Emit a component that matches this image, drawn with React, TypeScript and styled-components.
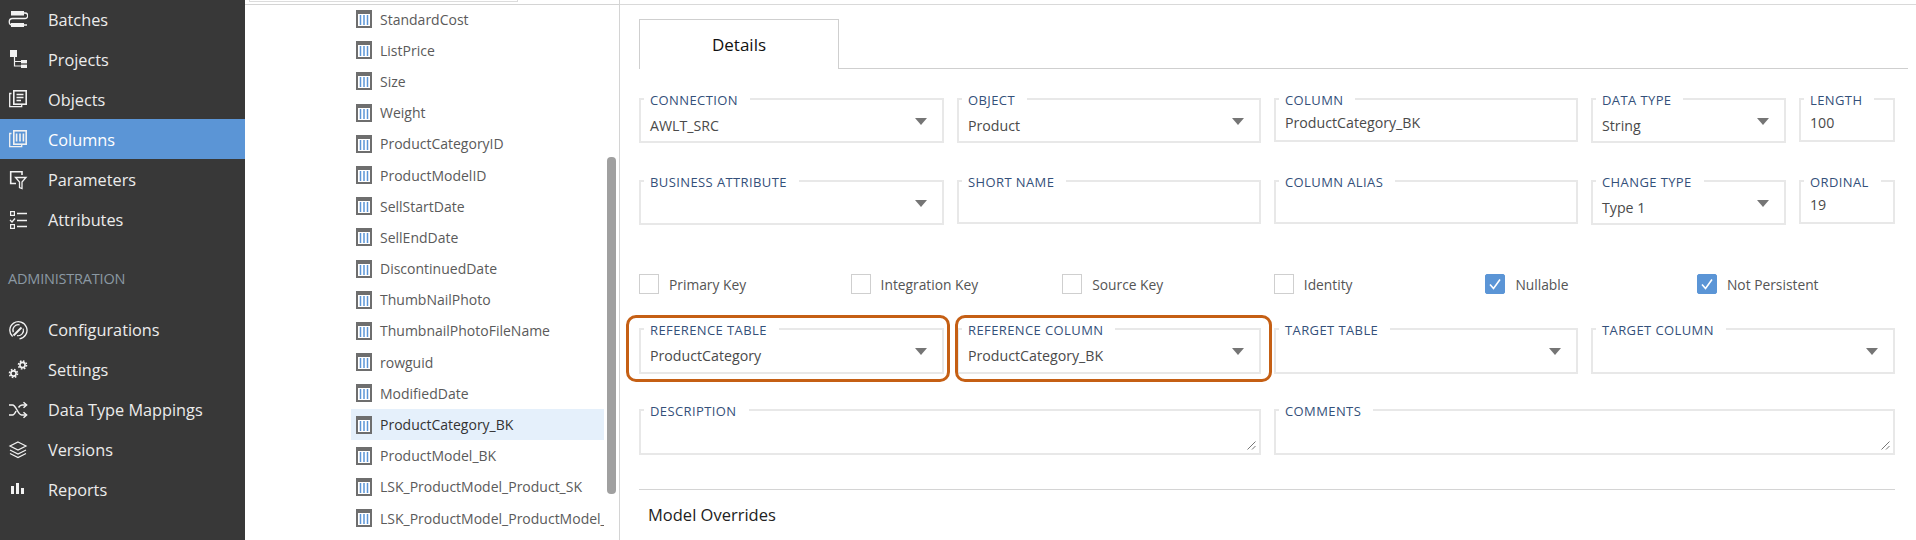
import React from 'react'
import styled, { createGlobalStyle } from 'styled-components'

const GlobalStyle = createGlobalStyle`
  html, body {
    margin: 0;
    background: #fff;
    overflow: hidden;
  }
  * {
    box-sizing: border-box;
  }
`

const BatchesIcon = () => (
  <NavSvg viewBox="0 0 20 20">
    <rect x="3" y="1" width="13" height="4.5" fill="currentColor" />
    <rect x="3" y="13" width="13" height="4" fill="currentColor" />
    <path d="M16 3h1a2.6 2.6 0 0 1 0 5.5H4.5a2.8 2.8 0 0 0 0 6.5H3M16 15h3" fill="none" stroke="currentColor" strokeWidth="1.3" />
  </NavSvg>
)
const ProjectsIcon = () => (
  <NavSvg viewBox="0 0 20 20">
    <rect x="2" y="0" width="7" height="7" fill="currentColor" />
    <path d="M6.5 7v9h6.5M6.5 11.5h6.5" fill="none" stroke="currentColor" strokeWidth="1.2" />
    <rect x="13" y="10" width="6" height="3.4" fill="currentColor" />
    <rect x="13" y="14.6" width="6" height="3.4" fill="currentColor" />
  </NavSvg>
)
const ObjectsIcon = () => (
  <NavSvg viewBox="0 0 20 20">
    <rect x="5.8" y="0.8" width="12.4" height="13.4" fill="none" stroke="currentColor" strokeWidth="1.6" />
    <path d="M3.5 3.5H1.7v13.2h12V15" fill="none" stroke="currentColor" strokeWidth="1.3" />
    <path d="M8.5 4.5h7M8.5 7.5h7M8.5 10.5h4.5" fill="none" stroke="currentColor" strokeWidth="1.4" />
  </NavSvg>
)
const ColumnsIcon = () => (
  <NavSvg viewBox="0 0 20 20">
    <rect x="5.8" y="0.8" width="12.4" height="13.4" fill="none" stroke="currentColor" strokeWidth="1.6" />
    <path d="M3.5 3.5H1.7v13.2h12V15" fill="none" stroke="currentColor" strokeWidth="1.3" />
    <path d="M8.6 3.5v8M12 3.5v8M15.4 3.5v8" fill="none" stroke="currentColor" strokeWidth="1.6" />
  </NavSvg>
)
const ParametersIcon = () => (
  <NavSvg viewBox="0 0 20 20">
    <path d="M14 5V1.8H2.7V13.5H8" fill="none" stroke="currentColor" strokeWidth="1.6" />
    <path d="M7.5 7.5h10.5l-4 4.5v6.5l-2.5-1V12z" fill="none" stroke="currentColor" strokeWidth="1.3" />
  </NavSvg>
)
const AttributesIcon = () => (
  <NavSvg viewBox="0 0 20 20">
    <rect x="2.6" y="1.6" width="3.8" height="3.8" fill="none" stroke="currentColor" strokeWidth="1.2" />
    <rect x="2.6" y="14.6" width="3.8" height="3.8" fill="none" stroke="currentColor" strokeWidth="1.2" />
    <path d="M2 10l2 2 3-3.5" fill="none" stroke="currentColor" strokeWidth="1.3" />
    <path d="M9 3.5h10M9 10.5h10M9 16.5h10" fill="none" stroke="currentColor" strokeWidth="1.3" />
  </NavSvg>
)
const ConfigurationsIcon = () => (
  <NavSvg viewBox="0 0 20 20">
    <path d="M4.6 16.6A8.6 8.6 0 1 1 11.5 18.8" fill="none" stroke="currentColor" strokeWidth="1.3" />
    <path d="M5.3 12.2A5.4 5.4 0 0 1 11.6 4.9M15.2 8.6A5.4 5.4 0 0 1 9 15.6" fill="none" stroke="currentColor" strokeWidth="1.2" />
    <path d="M5.5 15.5L13.5 7.5" fill="none" stroke="currentColor" strokeWidth="1.9" />
  </NavSvg>
)
const Gear = ({ cx, cy }: { cx: number; cy: number }) => (
  <g fill="none" stroke="currentColor">
    <circle cx={cx} cy={cy} r="2.6" strokeWidth="1.6" />
    <circle cx={cx} cy={cy} r="4" strokeWidth="1.6" strokeDasharray="1.6 1.54" />
  </g>
)
const SettingsIcon = () => (
  <NavSvg viewBox="0 0 20 20">
    <Gear cx={5.5} cy={13.5} />
    <Gear cx={14.5} cy={5} />
  </NavSvg>
)
const MappingsIcon = () => (
  <NavSvg viewBox="0 0 20 20">
    <path d="M1 5h3.5c3.5 0 5.5 10 9 10H18M1 15h3.5c1.5 0 2.6-2 3.6-4M10.5 7.5C11.5 6 12.5 5 14 5h4" fill="none" stroke="currentColor" strokeWidth="1.5" />
    <path d="M15.5 2.2L18.6 5l-3.1 2.8M15.5 12.2l3.1 2.8-3.1 2.8" fill="none" stroke="currentColor" strokeWidth="1.5" />
  </NavSvg>
)
const VersionsIcon = () => (
  <NavSvg viewBox="0 0 20 20">
    <path d="M10 2l8 4-8 4-8-4zM2 10l8 4 8-4M2 13.5l8 4 8-4" fill="none" stroke="currentColor" strokeWidth="1.2" />
  </NavSvg>
)
const ReportsIcon = () => (
  <NavSvg viewBox="0 0 20 20">
    <rect x="3" y="6" width="3" height="8" fill="currentColor" />
    <rect x="8" y="3" width="3" height="11" fill="currentColor" />
    <rect x="13" y="8" width="3" height="6" fill="currentColor" />
  </NavSvg>
)

const ColumnRowIcon = () => (
  <ColumnSvg viewBox="0 0 16 18">
    <rect width="16" height="18" fill="#6e6e6e" />
    <rect x="2" y="4" width="12" height="12" fill="#fff" />
    <path d="M4.5 5v10M8 5v10M11.5 5v10" stroke="#5b95d6" strokeWidth="1.5" />
  </ColumnSvg>
)

const mainNav = [
  { name: 'Batches', icon: <BatchesIcon /> },
  { name: 'Projects', icon: <ProjectsIcon /> },
  { name: 'Objects', icon: <ObjectsIcon /> },
  { name: 'Columns', icon: <ColumnsIcon />, active: true },
  { name: 'Parameters', icon: <ParametersIcon /> },
  { name: 'Attributes', icon: <AttributesIcon /> },
]
const adminNav = [
  { name: 'Configurations', icon: <ConfigurationsIcon /> },
  { name: 'Settings', icon: <SettingsIcon /> },
  { name: 'Data Type Mappings', icon: <MappingsIcon /> },
  { name: 'Versions', icon: <VersionsIcon /> },
  { name: 'Reports', icon: <ReportsIcon /> },
]

const columns = [
  'StandardCost',
  'ListPrice',
  'Size',
  'Weight',
  'ProductCategoryID',
  'ProductModelID',
  'SellStartDate',
  'SellEndDate',
  'DiscontinuedDate',
  'ThumbNailPhoto',
  'ThumbnailPhotoFileName',
  'rowguid',
  'ModifiedDate',
  'ProductCategory_BK',
  'ProductModel_BK',
  'LSK_ProductModel_Product_SK',
  'LSK_ProductModel_ProductModel_SK',
]

const flags = [
  { name: 'Primary Key' },
  { name: 'Integration Key' },
  { name: 'Source Key' },
  { name: 'Identity' },
  { name: 'Nullable', checked: true },
  { name: 'Not Persistent', checked: true },
]

const SelectField: React.FC<{ label: string; value?: string; tall?: boolean; children?: React.ReactNode }> = ({ label, value, tall, children }) => (
  <Field $height={tall ? 46 : 45}>
    <FieldLabel>{label}</FieldLabel>
    <SelectBody>
      <FieldValue>{value}</FieldValue>
      <Arrow />
    </SelectBody>
    {children}
  </Field>
)

const InputField: React.FC<{ label: string; value?: string }> = ({ label, value }) => (
  <Field $height={44}>
    <FieldLabel>{label}</FieldLabel>
    <InputBody>{value}</InputBody>
  </Field>
)

const App: React.FC = () => {
  return (
    <Page>
      <GlobalStyle />
      <Sidebar>
        {mainNav.map((item) => (
          <NavItem key={item.name} $active={item.active}>
            {item.icon}
            {item.name}
          </NavItem>
        ))}
        <NavHeading>ADMINISTRATION</NavHeading>
        {adminNav.map((item) => (
          <NavItem key={item.name}>
            {item.icon}
            {item.name}
          </NavItem>
        ))}
      </Sidebar>
      <TreePane>
        <TreeTop>
          <SearchStub />
        </TreeTop>
        <ColumnList>
          {columns.map((name) => (
            <ColumnRow key={name} $selected={name === 'ProductCategory_BK'}>
              <ColumnRowIcon />
              {name}
            </ColumnRow>
          ))}
        </ColumnList>
        <ScrollThumb />
      </TreePane>
      <DetailPane>
        <DetailTop />
        <TabBar>
          <Tab>Details</Tab>
        </TabBar>
        <FieldRow $gap={29}>
          <SelectField label="CONNECTION" value="AWLT_SRC" />
          <SelectField label="OBJECT" value="Product" />
          <InputField label="COLUMN" value="ProductCategory_BK" />
          <SelectField label="DATA TYPE" value="String" />
          <InputField label="LENGTH" value="100" />
        </FieldRow>
        <FieldRow $gap={37}>
          <SelectField label="BUSINESS ATTRIBUTE" />
          <InputField label="SHORT NAME" />
          <InputField label="COLUMN ALIAS" />
          <SelectField label="CHANGE TYPE" value="Type 1" />
          <InputField label="ORDINAL" value="19" />
        </FieldRow>
        <FlagRow>
          {flags.map((flag) => (
            <Flag key={flag.name}>
              <CheckBox $checked={flag.checked}>
                {flag.checked && (
                  <svg width="14" height="14" viewBox="0 0 14 14">
                    <path d="M2 7.5l3.5 4L12 2.5" fill="none" stroke="#fff" strokeWidth="1.6" />
                  </svg>
                )}
              </CheckBox>
              {flag.name}
            </Flag>
          ))}
        </FlagRow>
        <FieldRow $gap={34}>
          <SelectField label="REFERENCE TABLE" value="ProductCategory" tall>
            <Outline $left={-15} $right={-8} />
          </SelectField>
          <SelectField label="REFERENCE COLUMN" value="ProductCategory_BK" tall>
            <Outline $left={-4} $right={-13} />
          </SelectField>
          <SelectField label="TARGET TABLE" tall />
          <TwoColumns>
            <SelectField label="TARGET COLUMN" tall />
          </TwoColumns>
        </FieldRow>
        <FieldRow $gap={35}>
          <TwoColumns>
            <Field $height={46}>
              <FieldLabel>DESCRIPTION</FieldLabel>
              <ResizeGrip viewBox="0 0 9 9">
                <path d="M0.5 8.5l8-8M5 8.5l3.5-3.5" stroke="#666" strokeWidth="0.9" fill="none" />
              </ResizeGrip>
            </Field>
          </TwoColumns>
          <ThreeColumns>
            <Field $height={46}>
              <FieldLabel>COMMENTS</FieldLabel>
              <ResizeGrip viewBox="0 0 9 9">
                <path d="M0.5 8.5l8-8M5 8.5l3.5-3.5" stroke="#666" strokeWidth="0.9" fill="none" />
              </ResizeGrip>
            </Field>
          </ThreeColumns>
        </FieldRow>
        <Divider />
        <SectionTitle>Model Overrides</SectionTitle>
      </DetailPane>
    </Page>
  )
}
export default App

const Page = styled.div`
  display: flex;
  width: 1916px;
  height: 540px;
  overflow: hidden;
  font-family: 'Open Sans', 'Noto Sans', sans-serif;
`
const Sidebar = styled.nav`
  flex: 0 0 245px;
  margin-top: -1px;
  background: #383838;
  height: 541px;
`
const NavItem = styled.div<{ $active?: boolean }>`
  display: flex;
  align-items: center;
  gap: 20px;
  height: 40px;
  padding: 1px 0 0 8px;
  font-size: 16.3px;
  color: ${(props) => (props.$active ? '#fff' : '#ececec')};
  background: ${(props) => (props.$active ? '#5b95d6' : 'transparent')};
`
const NavSvg = styled.svg`
  flex: none;
  width: 20px;
  height: 20px;
  color: #f2f2f2;
`
const NavHeading = styled.div`
  height: 70px;
  padding: 32px 0 0 8px;
  font-size: 14.5px;
  line-height: 16px;
  letter-spacing: -0.2px;
  color: #8b98a3;
`
const TreePane = styled.div`
  position: relative;
  flex: 0 0 375px;
  height: 540px;
  border-right: 1px solid #d4d4d4;
  overflow: hidden;
`
const TreeTop = styled.div`
  height: 5px;
  padding-left: 4px;
  border-bottom: 1px solid #d4d4d4;
`
const SearchStub = styled.div`
  width: 269px;
  height: 2px;
  border: 1px solid #dcdcdc;
  border-top: none;
`
const ColumnList = styled.div`
  margin: -1.5px 0 0 106px;
  width: 253px;
`
const ColumnRow = styled.div<{ $selected?: boolean }>`
  display: flex;
  align-items: center;
  gap: 8px;
  height: 31.2px;
  padding-left: 5px;
  font-size: 14px;
  white-space: nowrap;
  overflow: hidden;
  color: ${(props) => (props.$selected ? '#333' : '#5a5a5a')};
  background: ${(props) => (props.$selected ? '#e5f0fb' : 'transparent')};
`
const ColumnSvg = styled.svg`
  flex: none;
  width: 16px;
  height: 18px;
`
const ScrollThumb = styled.div`
  position: absolute;
  top: 157px;
  left: 362px;
  width: 9px;
  height: 337px;
  border-radius: 4px;
  background: #a0a0a0;
`
const DetailPane = styled.div`
  flex: 1;
  min-width: 0;
  padding: 0 21px 0 19px;
`
const DetailTop = styled.div`
  height: 5px;
  margin: 0 -21px 0 -19px;
  border-bottom: 1px solid #d9d9d9;
`
const TabBar = styled.div`
  display: flex;
  height: 50px;
  margin: 14px -13px 0 0;
  border-bottom: 1px solid #cfcfcf;
`
const Tab = styled.div`
  width: 200px;
  height: 50px;
  border: 1px solid #cfcfcf;
  border-bottom: none;
  background: #fff;
  font-size: 17px;
  font-weight: 500;
  line-height: 50px;
  text-align: center;
  color: #111;
`
const FieldRow = styled.div<{ $gap: number }>`
  display: grid;
  grid-template-columns: 305px 304px 304px 195px 96px;
  column-gap: 13px;
  align-items: start;
  margin-top: ${(props) => props.$gap}px;
`
const TwoColumns = styled.div`
  grid-column: span 2;
`
const ThreeColumns = styled.div`
  grid-column: span 3;
`
const Field = styled.div<{ $height: number }>`
  position: relative;
  height: ${(props) => props.$height}px;
  padding: 0 15px 0 9px;
  border: 2px solid #e8e8e8;
`
const FieldLabel = styled.span`
  position: absolute;
  top: -7px;
  left: 3px;
  padding: 0 12px 0 6px;
  background: #fff;
  font-size: 13px;
  line-height: 15px;
  letter-spacing: 0.4px;
  white-space: nowrap;
  color: #34507a;
`
const SelectBody = styled.div`
  display: flex;
  justify-content: space-between;
  align-items: flex-start;
  padding-top: 16px;
`
const FieldValue = styled.div`
  min-height: 20px;
  font-size: 14.2px;
  line-height: 20px;
  color: #4a4a4a;
`
const InputBody = styled.div`
  padding-top: 13px;
  font-size: 14.2px;
  line-height: 20px;
  color: #4a4a4a;
`
const Arrow = styled.div`
  margin-top: 2px;
  border-left: 6.5px solid transparent;
  border-right: 6.5px solid transparent;
  border-top: 7px solid #757575;
`
const Outline = styled.div<{ $left: number; $right: number }>`
  position: absolute;
  top: -15px;
  bottom: -10px;
  left: ${(props) => props.$left}px;
  right: ${(props) => props.$right}px;
  border: 3px solid #c55f14;
  border-radius: 10px;
  pointer-events: none;
`
const ResizeGrip = styled.svg`
  position: absolute;
  right: 3px;
  bottom: 3px;
  width: 9px;
  height: 9px;
`
const FlagRow = styled.div`
  display: grid;
  grid-template-columns: repeat(6, 211.6px);
  margin-top: 49px;
`
const Flag = styled.label`
  display: flex;
  align-items: center;
  gap: 10px;
  height: 20px;
  font-size: 13.8px;
  color: #555;
`
const CheckBox = styled.span<{ $checked?: boolean }>`
  display: flex;
  align-items: center;
  justify-content: center;
  width: 20px;
  height: 20px;
  border: 1px solid ${(props) => (props.$checked ? '#5b95d6' : '#cfcfcf')};
  border-radius: ${(props) => (props.$checked ? '2px' : '0')};
  background: ${(props) => (props.$checked ? '#5b95d6' : '#fff')};
`
const Divider = styled.div`
  height: 1px;
  margin-top: 34px;
  background: #d4d4d4;
`
const SectionTitle = styled.div`
  padding: 14px 0 0 9px;
  font-size: 16.5px;
  font-weight: 500;
  line-height: 21px;
  color: #222;
`
